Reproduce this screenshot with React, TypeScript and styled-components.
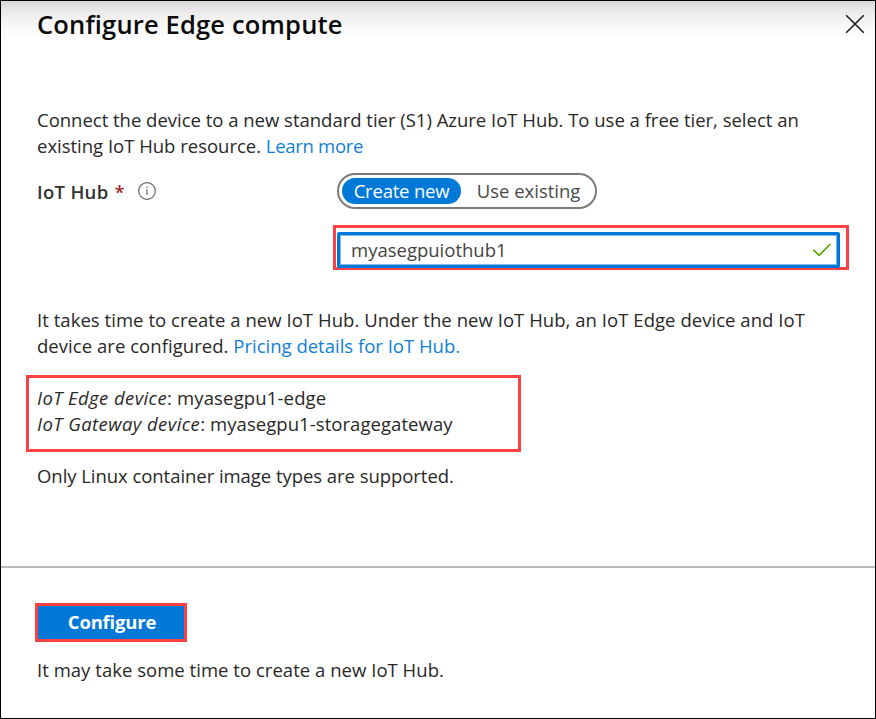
import React, { useState } from 'react';
import styled, { createGlobalStyle } from 'styled-components';

const azure = '#0078d7';
const callout = '#fd4145';

const GlobalStyle = createGlobalStyle`
  * { box-sizing: border-box; }
  body { margin: 0; background: #fff; }
`;

const Panel = styled.main`
  display: flex;
  flex-direction: column;
  width: 876px;
  height: 719px;
  overflow: hidden;
  border: 1px solid #000;
  background: linear-gradient(#d8d5d8, #ebeaeb 10px, #f7f6f7 22px, #fff 38px) no-repeat, #fff;
  color: #292827;
  font: 400 18.5px/26px "Open Sans", sans-serif;
  white-space: nowrap;
`;

const Header = styled.header`
  display: flex;
  justify-content: space-between;
  align-items: flex-start;
  height: 106px;
  padding: 5px 10px 0 36px;
`;

const Title = styled.h1`
  margin: 0;
  color: #0b0b0b;
  font-size: 25.5px;
  font-weight: 600;
  line-height: 36px;
  letter-spacing: 0.17px;
`;

const CloseButton = styled.button`
  display: flex;
  margin-top: 8px;
  padding: 0;
  border: 0;
  background: none;
`;

const Content = styled.section`
  display: flex;
  flex-direction: column;
  height: 459px;
`;

const Paragraph = styled.p<{ $tracking?: number }>`
  margin: 0 36px;
  letter-spacing: ${(p) => p.$tracking ?? 0}px;
`;

const Link = styled.a<{ $tracking?: number }>`
  color: #0f80da;
  letter-spacing: ${(p) => p.$tracking ?? 0}px;
`;

const Field = styled.div`
  display: grid;
  grid-template-columns: 300px auto;
  justify-content: start;
  align-items: center;
  margin: 14px 0 0 36px;
  height: 36px;
`;

const Label = styled.div`
  display: flex;
  align-items: center;
  padding-top: 2px;
  color: #323130;
  font-weight: 600;
  letter-spacing: 0.3px;
  svg { margin: -2px 0 0 13px; }
`;

const Required = styled.span`
  margin-left: 6px;
  color: #a4262c;
  font-weight: 600;
`;

const Toggle = styled.div`
  display: flex;
  width: 260px;
  height: 36px;
  padding: 3px;
  border: 2px solid #7d7b79;
  border-radius: 18px;
`;

const Option = styled.button<{ $active: boolean; $width: number }>`
  flex: none;
  width: ${(p) => p.$width}px;
  height: 26px;
  padding: 0;
  border: 0;
  border-radius: 13px;
  background: ${(p) => (p.$active ? azure : 'transparent')};
  color: ${(p) => (p.$active ? '#fff' : '#4a4948')};
  font: inherit;
  font-weight: ${(p) => (p.$active ? 500 : 400)};
  line-height: 26px;
  letter-spacing: ${(p) => (p.$active ? -0.2 : 0)}px;
`;

const InputCallout = styled.div`
  width: 516px;
  height: 45px;
  margin: 16px 0 0 332px;
  padding: 4px 6px 0 1px;
  border: 3px solid ${callout};
`;

const InputFrame = styled.div`
  display: flex;
  align-items: center;
  width: 503px;
  height: 36px;
  padding-right: 5px;
  border: 3px solid ${azure};
  border-radius: 2px;
  box-shadow: inset 0 0 0 1px #7db9ea;
`;

const Input = styled.input`
  flex: 1;
  min-width: 0;
  height: 28px;
  padding: 0 0 2px 11px;
  border: 0;
  outline: 0;
  background: transparent;
  color: #444342;
  font: inherit;
  letter-spacing: 0;
`;

const Notice = styled.div`
  height: 52px;
  margin-top: 37px;
`;

const DeviceCallout = styled.div`
  width: 495px;
  height: 77px;
  margin: 16px 0 0 25px;
  padding: 7px 0 0 8px;
  border: 3px solid ${callout};
`;

const Device = styled.div<{ $tracking: number }>`
  letter-spacing: ${(p) => p.$tracking}px;
`;

const DeviceKind = styled.em<{ $tracking: number }>`
  letter-spacing: ${(p) => p.$tracking}px;
`;

const Supported = styled.div`
  margin-top: 11px;
`;

const Footer = styled.footer`
  flex: 1;
  padding-top: 35px;
  border-top: 2px solid #bbb;
`;

const ConfigureButton = styled.button`
  display: block;
  width: 152px;
  height: 39px;
  margin: 0 0 15px 34px;
  padding: 0 0 1px 2px;
  border: 3px solid ${callout};
  background: ${azure};
  color: #fff;
  font: 700 18.5px/32px "Open Sans", sans-serif;
  letter-spacing: -0.2px;
`;

const CloseIcon = () => (
  <svg width="20" height="20" viewBox="0 0 20 20" fill="none" stroke="#161616" strokeWidth="1.5">
    <path d="M1.2 1.2 18.8 18.8M18.8 1.2 1.2 18.8" />
  </svg>
);

const InfoIcon = () => (
  <svg width="18" height="18" viewBox="0 0 18 18" fill="none" stroke="#646362">
    <circle cx="9" cy="9" r="8.3" strokeWidth="1.2" />
    <path d="M9 7.3v5.8" strokeWidth="1.3" stroke="#777" />
    <path d="M9 4.6v1.5" strokeWidth="1.4" stroke="#777" />
  </svg>
);

const CheckIcon = () => (
  <svg width="20" height="16" viewBox="0 0 20 16" fill="none" stroke="#57a300" strokeWidth="1.7">
    <path d="m1.5 7.8 5.6 5.5L18.5 2" />
  </svg>
);

export default function App() {
  const [createNew, setCreateNew] = useState(true);
  const [hubName, setHubName] = useState('myasegpuiothub1');

  return (
    <>
      <GlobalStyle />
      <Panel>
        <Header>
          <Title>Configure Edge compute</Title>
          <CloseButton aria-label="Close"><CloseIcon /></CloseButton>
        </Header>
        <Content>
          <Paragraph $tracking={-0.012}>
            Connect the device to a new standard tier (S1) Azure IoT Hub. To use a free tier, select an
            <br />
            existing IoT Hub resource. <Link $tracking={-0.3}>Learn more</Link>
          </Paragraph>
          <Field>
            <Label>
              IoT Hub<Required>*</Required>
              <InfoIcon />
            </Label>
            <Toggle>
              <Option $active={createNew} $width={119} onClick={() => setCreateNew(true)}>Create new</Option>
              <Option $active={!createNew} $width={135} onClick={() => setCreateNew(false)}>Use existing</Option>
            </Toggle>
          </Field>
          <InputCallout>
            <InputFrame>
              <Input value={hubName} aria-label="IoT Hub name" onChange={(e) => setHubName(e.target.value)} />
              <CheckIcon />
            </InputFrame>
          </InputCallout>
          <Notice>
            <Paragraph $tracking={0.045}>
              It takes time to create a new IoT Hub. Under the new IoT Hub, an IoT Edge device and IoT
              <br />
              device are configured. <Link $tracking={0}>Pricing details for IoT Hub.</Link>
            </Paragraph>
          </Notice>
          <DeviceCallout>
            <Device $tracking={0.15}>
              <DeviceKind $tracking={0.4}>IoT Edge device</DeviceKind>: myasegpu1-edge
            </Device>
            <Device $tracking={0.06}>
              <DeviceKind $tracking={0.43}>IoT Gateway device</DeviceKind>: myasegpu1-storagegateway
            </Device>
          </DeviceCallout>
          <Supported>
            <Paragraph $tracking={-0.05}>Only Linux container image types are supported.</Paragraph>
          </Supported>
        </Content>
        <Footer>
          <ConfigureButton>Configure</ConfigureButton>
          <Paragraph $tracking={0.03}>It may take some time to create a new IoT Hub.</Paragraph>
        </Footer>
      </Panel>
    </>
  );
}
